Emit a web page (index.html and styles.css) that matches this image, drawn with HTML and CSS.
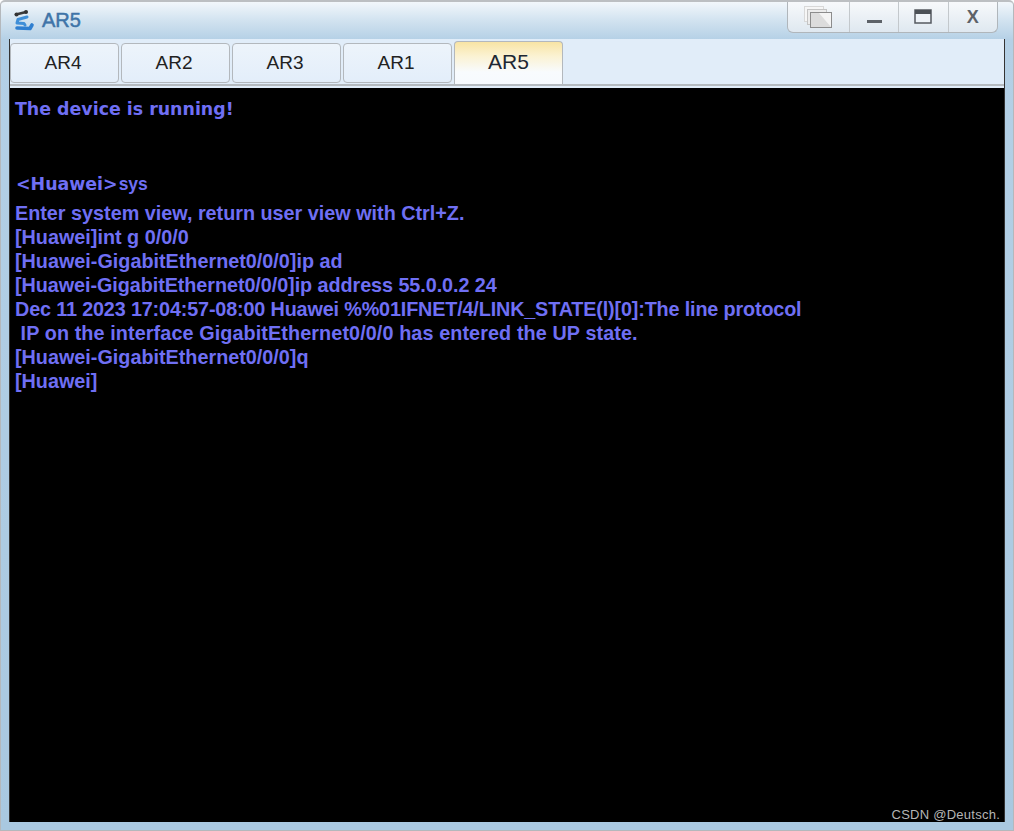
FILE: index.html
```html
<!DOCTYPE html>
<html lang="en">
<head>
<meta charset="utf-8">
<title>AR5</title>
<link rel="stylesheet" href="styles.css">
</head>
<body>
<div class="window">
  <header class="titlebar">
    <div class="title">
      <svg class="logo" width="24" height="24" viewBox="0 0 24 24">
        <path d="M4 6.5 L14 4" stroke="#3a3a3a" stroke-width="2.6" stroke-linecap="round" fill="none"/>
        <circle cx="4.5" cy="6.5" r="2" fill="#333"/><circle cx="14" cy="4" r="2" fill="#333"/>
        <path d="M15 9 L6 11.5 L5 15 L12 15.5 L13 17" stroke="#3f8fd8" stroke-width="3" stroke-linecap="round" stroke-linejoin="round" fill="none"/>
        <path d="M5 20 L18 20.5 L20 17" stroke="#2f7fd0" stroke-width="3.6" stroke-linecap="round" stroke-linejoin="round" fill="none"/>
      </svg>
      <span class="title-text">AR5</span>
    </div>
    <div class="controls">
      <div class="ctl ctl-wide">
        <svg width="30" height="24" viewBox="0 0 30 24">
          <rect x="1.5" y="1.5" width="19" height="15" fill="#f6f6f6" stroke="#d8d8d8"/>
          <rect x="4.5" y="4.5" width="19" height="15" fill="#ececec" stroke="#c4c4c4"/>
          <rect x="7.5" y="7.5" width="21" height="15" fill="#dcdcdc" stroke="#8c8c8c"/>
          <path d="M16 8 L28 8 L28 22 Z" fill="#f4f4f4"/>
        </svg>
      </div>
      <div class="ctl"><svg width="16" height="16" viewBox="0 0 16 16"><rect x="1" y="11" width="15" height="3" fill="#5d6268"/></svg></div>
      <div class="ctl"><svg width="18" height="16" viewBox="0 0 18 16"><rect x="1" y="1" width="16" height="13" fill="#eef3f8" stroke="#555a60" stroke-width="1.5"/><rect x="1" y="1" width="16" height="4" fill="#4c5157"/></svg></div>
      <div class="ctl ctl-close">X</div>
    </div>
  </header>
  <div class="content">
    <nav class="tabs">
      <div class="tab">AR4</div>
      <div class="tab">AR2</div>
      <div class="tab">AR3</div>
      <div class="tab">AR1</div>
      <div class="tab tab-active">AR5</div>
    </nav>
    <main class="terminal">
      <div class="line wide first">The device is running!</div>
      <div class="line wide prompt">&lt;Huawei&gt;<span class="narrow">sys</span></div>
      <div class="line">Enter system view, return user view with Ctrl+Z.</div>
      <div class="line">[Huawei]int g 0/0/0</div>
      <div class="line">[Huawei-GigabitEthernet0/0/0]ip ad</div>
      <div class="line snug">[Huawei-GigabitEthernet0/0/0]ip address 55.0.0.2 24</div>
      <div class="line tight">Dec 11 2023 17:04:57-08:00 Huawei %%01IFNET/4/LINK_STATE(l)[0]:The line protocol</div>
      <div class="line loose">&nbsp;IP on the interface GigabitEthernet0/0/0 has entered the UP state.</div>
      <div class="line">[Huawei-GigabitEthernet0/0/0]q</div>
      <div class="line">[Huawei]</div>
      <div class="watermark">CSDN @Deutsch.</div>
    </main>
  </div>
</div>
</body>
</html>
```

FILE: styles.css
```css
* { box-sizing: border-box; }
html, body { margin: 0; padding: 0; background: #fff; }
body { width: 1014px; height: 831px; overflow: hidden; font-family: "Liberation Sans", Arial, sans-serif; }

.window {
  width: 1014px;
  height: 831px;
  display: flex;
  flex-direction: column;
  padding: 0 8px 8px 8px;
  background: linear-gradient(#f2f7fb 0, #cfe1ef 20px, #b4d0e6 38px, #a9c8e0 100%);
  border: 1px solid #b4b8bc;
  border-top: 2px solid #bcbfc2;
  border-radius: 5px 5px 0 0;
}

.titlebar {
  height: 37px;
  flex: none;
  display: flex;
  justify-content: space-between;
  align-items: flex-start;
}
.title { display: flex; align-items: center; height: 36px; margin-left: 3px; gap: 6px; }
.title-text { font-size: 20px; font-weight: 400; color: #3f74a8; -webkit-text-stroke: 0.5px #3f74a8; }
.logo { display: block; }

.controls {
  display: flex;
  height: 31px;
  margin-right: 7px;
  border: 1px solid #b0b6bb;
  border-top: 0;
  border-radius: 0 0 6px 6px;
  background: linear-gradient(#f7f9fb, #dfe8f0);
}
.ctl {
  width: 49.5px;
  display: flex;
  align-items: center;
  justify-content: center;
  border-left: 1px solid #c3c8cc;
}
.ctl:first-child { border-left: 0; }
.ctl-wide { width: 61px; }
.ctl-close { font-size: 18px; font-weight: 700; color: #5d6268; }

.content {
  flex: 1;
  display: flex;
  flex-direction: column;
  min-height: 0;
  border-left: 1px solid #333;
  border-right: 1px solid #333;
  background: #e1edf9;
}

.tabs {
  height: 47px;
  flex: none;
  display: flex;
  gap: 2px;
  padding: 4px 0 0 0;
  background: #e1edf9;
  border-bottom: 2px solid #b5bbc0;
}
.tab {
  width: 109px;
  height: 40px;
  border: 1px solid #b3b8bd;
  border-radius: 4px;
  background: linear-gradient(#edf4fb, #e3eefa);
  font-size: 19px;
  line-height: 38px;
  text-align: center;
  padding-right: 3px;
  color: #222;
}
.tab-active {
  height: 43px;
  margin-top: -2px;
  padding-right: 0;
  font-size: 21px;
  line-height: 40px;
  border-bottom: 0;
  border-radius: 4px 4px 0 0;
  background: linear-gradient(#f8e4a4 0, #fbf2d2 14px, #f8fbfe 30px, #f6fafe 100%);
  color: #1d2733;
}

.terminal {
  position: relative;
  flex: 1;
  background: #000;
  margin-top: 2px;
  padding: 9px 0 0 5px;
  color: #6f6ff4;
  font-size: 19.8px;
  font-weight: 700;
  line-height: 24px;
}
.line { height: 24px; white-space: pre; }
.snug { letter-spacing: -0.06px; }
.tight { letter-spacing: -0.15px; }
.loose { letter-spacing: 0.1px; }
.wide { font-family: "DejaVu Sans", Verdana, sans-serif; }
.first { font-size: 17.4px; }
.prompt { margin: 51px 0 5px 1px; font-size: 17.4px; }
.narrow { font-family: "Liberation Sans", Arial, sans-serif; font-size: 17.5px; margin-left: 1px; }

.watermark {
  position: absolute;
  right: 4px;
  bottom: -3px;
  font-size: 13px;
  font-weight: 400;
  line-height: 20px;
  letter-spacing: 0.25px;
  color: #b5b5b5;
}
```
